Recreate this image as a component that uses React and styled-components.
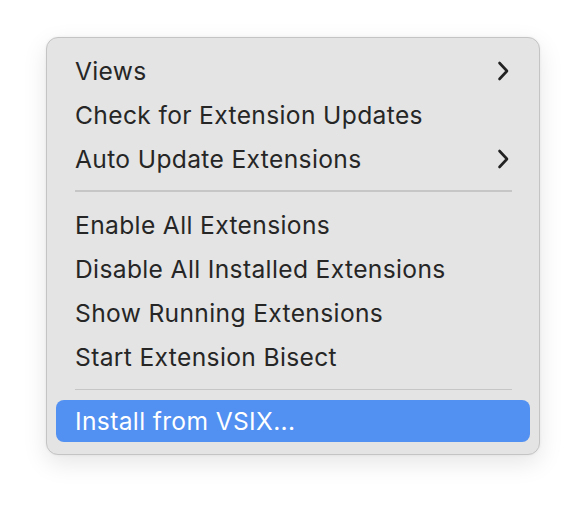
import React from 'react'
import styled, { createGlobalStyle } from 'styled-components'

const Global = createGlobalStyle`
  body {
    margin: 0;
    background: #ffffff;
    font-family: Inter, "Noto Sans", sans-serif;
  }
`

const Page = styled.div`
  width: 586px;
  height: 508px;
  padding: 37px 0 0 46px;
  box-sizing: border-box;
`

const Menu = styled.div`
  width: 494px;
  box-sizing: border-box;
  background: #e4e4e4;
  border: 1px solid #c4c4c4;
  border-radius: 12px;
  padding: 11px 9px 12px 9px;
  display: flex;
  flex-direction: column;
  box-shadow: 0 8px 24px rgba(0, 0, 0, 0.10), 0 0 3px rgba(0, 0, 0, 0.06);
`

const Item = styled.div`
  height: ${(props) => (props.active ? '42px' : '44px')};
  display: flex;
  align-items: center;
  justify-content: space-between;
  padding: 0 20px 0 19px;
  border-radius: 8px;
  font-size: 24.6px;
  letter-spacing: 0.35px;
  color: ${(props) => (props.active ? '#ffffff' : '#262626')};
  background: ${(props) => (props.active ? '#5290f1' : 'transparent')};
`

const Separator = styled.div`
  height: 1.5px;
  background: #c6c6c6;
  margin: ${(props) => props.margin};
  margin-left: 19px;
  margin-right: 18px;
`

const Chevron = () => (
  <svg width="13" height="20" viewBox="0 0 13 20">
    <path d="M2.5 2 L10 10 L2.5 18" fill="none" stroke="#222" strokeWidth="2.6" strokeLinecap="round" strokeLinejoin="round" />
  </svg>
)

const App = () => {
  return (
    <Page>
      <Global />
      <Menu>
        <Item>Views<Chevron /></Item>
        <Item>Check for Extension Updates</Item>
        <Item>Auto Update Extensions<Chevron /></Item>
        <Separator margin="9px 0 11.5px" />
        <Item>Enable All Extensions</Item>
        <Item>Disable All Installed Extensions</Item>
        <Item>Show Running Extensions</Item>
        <Item>Start Extension Bisect</Item>
        <Separator margin="9.5px 0 10px" />
        <Item active>Install from VSIX...</Item>
      </Menu>
    </Page>
  )
}

export default App
